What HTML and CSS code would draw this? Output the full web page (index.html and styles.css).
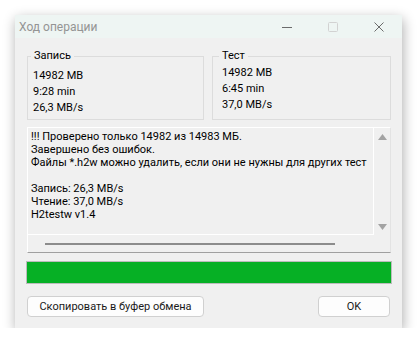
FILE: index.html
```html
<!DOCTYPE html>
<html lang="ru">
<head>
<meta charset="utf-8">
<title>Ход операции</title>
<link rel="stylesheet" href="styles.css">
</head>
<body>
<div class="window">
  <div class="titlebar">
    <span class="title">Ход операции</span>
    <div class="caption-buttons">
      <span class="cap-btn"><svg width="10" height="10" viewBox="0 0 10 10"><path d="M0 5.5H10" stroke="#6b6b6b" stroke-width="1"/></svg></span>
      <span class="cap-btn"><svg width="10" height="10" viewBox="0 0 10 10"><rect x="0.5" y="0.5" width="9" height="9" rx="1" fill="none" stroke="#d2d2d2" stroke-width="1"/></svg></span>
      <span class="cap-btn"><svg width="10" height="10" viewBox="0 0 10 10"><path d="M0.5 0.5L9.5 9.5M9.5 0.5L0.5 9.5" stroke="#6b6b6b" stroke-width="1"/></svg></span>
    </div>
  </div>
  <div class="content">
    <div class="groups">
      <div class="group group-write">
        <span class="legend">Запись</span>
        <div class="values">
          <div>14982 MB</div>
          <div>9:28 min</div>
          <div>26,3 MB/s</div>
        </div>
      </div>
      <div class="group group-test">
        <span class="legend">Тест</span>
        <div class="values">
          <div>14982 MB</div>
          <div>6:45 min</div>
          <div>37,0 MB/s</div>
        </div>
      </div>
    </div>
    <div class="logbox">
      <div class="logtext">
        <div>!!! Проверено только 14982 из 14983 МБ.</div>
        <div>Завершено без ошибок.</div>
        <div>Файлы *.h2w можно удалить, если они не нужны для других тест</div>
        <div>&nbsp;</div>
        <div>Запись: 26,3 MB/s</div>
        <div>Чтение: 37,0 MB/s</div>
        <div>H2testw v1.4</div>
      </div>
      <div class="vscroll">
        <svg width="9" height="6" viewBox="0 0 9 6"><path d="M4.5 0L9 6H0Z" fill="#a3a3a3"/></svg>
        <svg width="9" height="6" viewBox="0 0 9 6"><path d="M0 0H9L4.5 6Z" fill="#a3a3a3"/></svg>
      </div>
      <div class="hscroll"><span class="hthumb"></span></div>
      <div class="corner"></div>
    </div>
    <div class="progress"><div class="progress-fill"></div></div>
    <div class="buttons">
      <button class="btn btn-copy">Скопировать в буфер обмена</button>
      <button class="btn btn-ok">OK</button>
    </div>
  </div>
</div>
</body>
</html>
```
FILE: styles.css
```css
html, body {
  margin: 0;
  padding: 0;
  background: #ffffff;
}
body {
  padding: 15px 0 0 15px;
  font-family: Roboto, "Noto Sans", sans-serif;
  font-size: 11px;
  color: #000;
}
.window {
  width: 387px;
  background: #f0f0f0;
  box-shadow: 1px 4px 12px rgba(0, 0, 0, 0.33);
}
.titlebar {
  height: 23px;
  background: #eef5f3;
  display: flex;
  align-items: center;
  justify-content: space-between;
}
.title {
  padding-left: 4px;
  font-size: 12px;
  color: #949494;
}
.caption-buttons {
  display: flex;
  height: 100%;
}
.cap-btn {
  width: 46px;
  height: 100%;
  display: flex;
  align-items: center;
  justify-content: center;
}
.content {
  padding: 18px 11px 11px 12px;
}
.groups {
  display: grid;
  grid-template-columns: 177px 179px;
  column-gap: 8px;
}
.group {
  border: 1px solid #dcdcdc;
  line-height: 16px;
}
.legend {
  display: block;
  width: fit-content;
  margin: -8px 0 0 3px;
  padding: 0 3px;
  line-height: 14px;
  background: #f0f0f0;
}
.group-write .values {
  padding: 5px 0 3px 5px;
}
.group-test .legend {
  margin-left: 6px;
}
.group-test .values {
  padding: 2px 0 0 9px;
}
.logbox {
  margin-top: 7px;
  display: grid;
  grid-template-columns: 346px 17px;
  grid-template-rows: 107px 17px;
  border-top: 1px solid #ffffff;
  border-left: 1px solid #ffffff;
  border-right: 1px solid #e3e3e3;
  border-bottom: 1px solid #a0a0a0;
}
.logtext {
  border-right: 1px solid #ffffff;
  border-bottom: 1px solid #ffffff;
  padding: 2px 0 0 3px;
  line-height: 13px;
  white-space: nowrap;
  overflow: hidden;
}
.vscroll {
  display: flex;
  flex-direction: column;
  align-items: center;
  justify-content: space-between;
  padding: 6px 0 5px;
}
.hscroll {
  display: flex;
  align-items: center;
  padding-left: 17px;
}
.hthumb {
  display: block;
  width: 290px;
  height: 2px;
  background: #8c8c8c;
}
.progress {
  margin: 8px -1px 0;
  height: 21px;
  border: 1px solid #bcbcbc;
  background: #e6e6e6;
}
.progress-fill {
  height: 100%;
  width: 100%;
  background: #06b025;
}
.buttons {
  margin-top: 12px;
  display: flex;
  justify-content: space-between;
}
.btn {
  height: 21px;
  padding: 0;
  border: 1px solid #d0d0d0;
  border-radius: 4px;
  background: #fdfdfd;
  font-family: Roboto, "Noto Sans", sans-serif;
  font-size: 11px;
  color: #1a1a1a;
}
.btn-copy {
  width: 177px;
}
.btn-ok {
  width: 72px;
  margin-right: 1px;
}
```
